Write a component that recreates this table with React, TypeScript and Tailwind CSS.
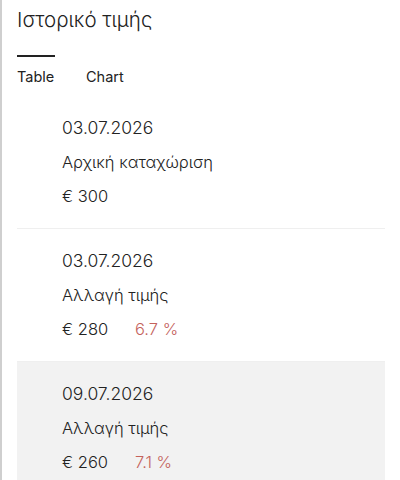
import React from "react";

const rows = [
  { date: "03.07.2026", desc: "Αρχική καταχώριση", price: "€ 300", pct: "" },
  { date: "03.07.2026", desc: "Αλλαγή τιμής", price: "€ 280", pct: "6.7 %" },
  { date: "09.07.2026", desc: "Αλλαγή τιμής", price: "€ 260", pct: "7.1 %" },
];

export default function App() {
  return (
    <div
      className="w-[400px] h-[480px] overflow-hidden bg-white border-l-2 border-[#cfcfcf] text-[#222] font-light"
      style={{ fontFamily: "Inter, 'Noto Sans', sans-serif" }}
    >
      <div className="pl-[15px] pr-[15px]">
        <div className="pt-[6px] text-[20.5px] leading-[28px] text-[#222]">Ιστορικό τιμής</div>
        <div className="mt-[21px] flex gap-[31px] text-[14.5px] font-normal">
          <div className="flex flex-col">
            <div className="h-[2px] bg-[#222] w-[38px]" />
            <div className="pt-[11px] leading-[18px]">Table</div>
          </div>
          <div className="pt-[13px] leading-[18px]">Chart</div>
        </div>
        <div className="mt-[10px]">
          {rows.map((r, i) => (
            <div
              key={i}
              className={
                "pl-[45px] pt-[15px] pb-[15px] text-[16.5px] leading-[34px] " +
                (i === 2 ? "bg-[#f2f2f2]" : "border-b border-[#efefef]")
              }
            >
              <div className="text-[17.5px]">{r.date}</div>
              <div>{r.desc}</div>
              <div className="flex">
                <span className="w-[73px]">{r.price}</span>
                {r.pct && <span className="text-[#c4625c]">{r.pct}</span>}
              </div>
            </div>
          ))}
        </div>
      </div>
    </div>
  );
}
